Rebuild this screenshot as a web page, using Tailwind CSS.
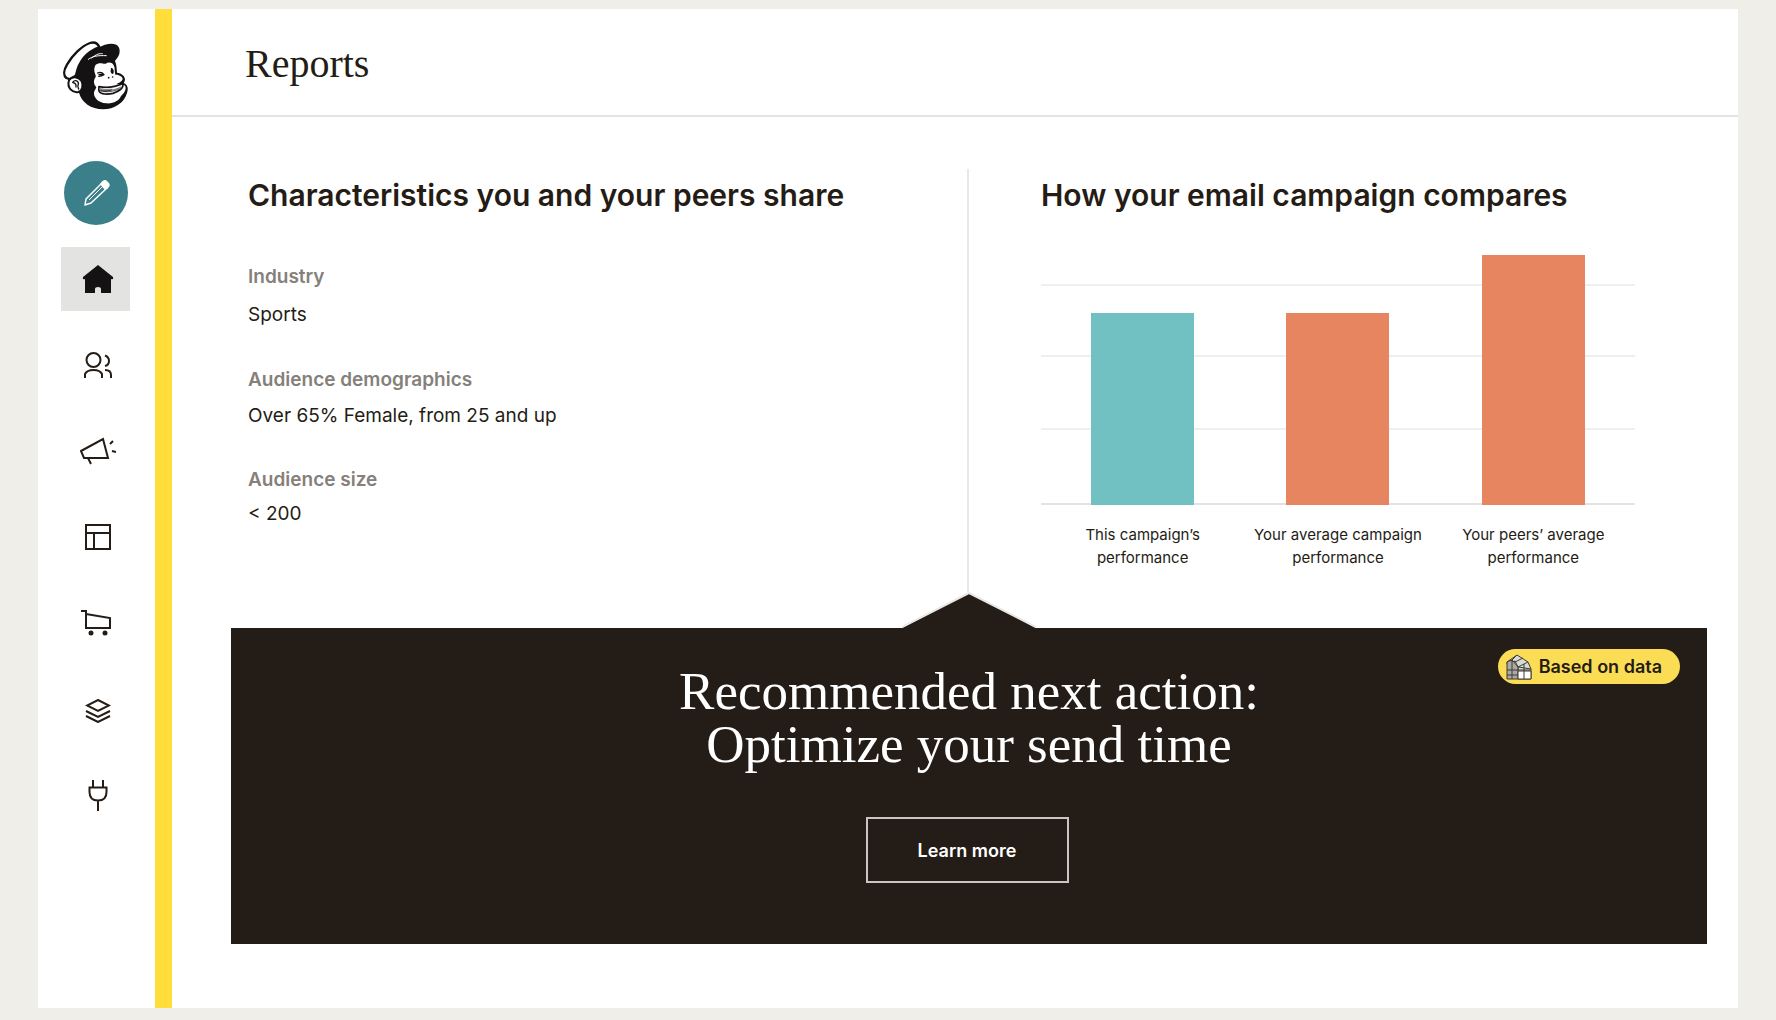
<!DOCTYPE html>
<html lang="en">
  <head>
    <meta charset="utf-8" />
    <meta name="viewport" content="width=device-width, initial-scale=1" />
    <title>Reports</title>
    <script src="https://cdn.jsdelivr.net/npm/@tailwindcss/browser@4"></script>
  </head>
  <body class="flex min-h-screen bg-[#efeee9] px-[38px] pt-[9px] pb-3 font-['Inter','Liberation_Sans',sans-serif] text-[#241c15]">
    <div class="flex flex-1 bg-white">

      <!-- sidebar -->
      <aside class="flex w-[134px] shrink-0 flex-col items-center border-r-[17px] border-[#ffde3b] pt-8 pr-[2px]">
        <a href="#" aria-label="Mailchimp">
          <svg class="h-[70px] w-[66px]" viewBox="38 33 198 210" fill="none" stroke-linecap="round" stroke-linejoin="round">
            <path fill="#141212" d="M86 106C96 82 120 60 147 52C160 44 182 38 198 44C210 50 211 70 202 82C199 88 195 90 194 93C199 104 199 116 200 128C214 130 224 138 224 149C223 155 220 158 221 160C232 164 235 176 230 189C222 218 192 238 158 238C122 237 94 218 86 188L70 186L60 146Z" />
            <path fill="#fff" d="M135 106C146 94 160 103 166 101C175 94 188 98 190 106C195 114 192 124 195 134C207 133 218 141 217 148C214 156 205 159 198 162C209 166 218 162 224 167C230 177 221 190 212 198C207 212 188 222 168 220C143 219 129 202 131 187C133 180 137 177 138 171C129 163 129 150 136 141C139 136 126 124 135 106Z" />
            <path fill="#fff" stroke="#141212" stroke-width="7" d="M48 144C38 136 41 119 50 104C66 76 94 48 119 39C132 35 142 40 147 51C111 65 86 92 78 132C78 141 65 140 60 148Z" />
            <path fill="#fff" stroke="#141212" stroke-width="6" d="M56 151C64 137 84 140 93 152C101 166 95 183 84 186C66 189 49 174 56 151Z" />
            <path stroke="#141212" stroke-width="4" d="M67 157C74 147 86 153 84 163C80 169 84 172 85 177M68 158C74 159 78 164 77 171" />
            <path stroke="#fff" stroke-width="3" d="M114 88C127 78 143 76 168 77M124 84C138 72 148 70 156 71" />
            <path stroke="#141212" stroke-width="4" d="M142 129C150 126 157 129 161 134C155 138 150 139 145 139M146 134L158 134" />
            <path fill="#141212" d="M182 113C188 113 191 120 190 128C187 135 181 131 181 124Z" />
            <circle cx="175" cy="143" r="2.500" fill="#141212" />
            <circle cx="187" cy="141" r="2.500" fill="#141212" />
            <path fill="#fff" stroke="#141212" stroke-width="5" d="M146 170C165 173 192 172 217 161C222 174 204 185 188 190C172 194 151 193 147 185C144 180 145 175 146 170Z" />
            <path fill="#8d8a88" d="M149 174C163 177 176 177 187 176C184 183 172 187 152 186C148 183 148 178 149 174Z" />
            <path stroke="#141212" stroke-width="2" d="M151 182C172 185 199 179 212 171M160 185C177 187 195 183 207 177" />
          </svg>
        </a>

        <nav class="mt-[50px] flex flex-col items-center gap-[22px]">
          <button type="button" aria-label="Create" class="flex size-16 items-center justify-center rounded-full bg-[#3b7f8a] text-white">
            <svg class="size-7" viewBox="0 0 28 28" fill="none" stroke="currentColor" stroke-width="1.500" stroke-linejoin="round">
              <path d="M3 26L4 20L20 4Q22 1 25 4Q28 6 25 9L9 24Z" />
              <path fill="currentColor" d="M19 5Q22 0 25 3Q29 6 25 9L23 10Z" />
              <path d="M7 21L20 8" stroke-width="1" />
            </svg>
          </button>
          <a href="#" aria-label="Home" class="flex h-16 w-[69px] items-center justify-center bg-[#e3e3e1]">
            <svg class="ml-1 h-7 w-8" viewBox="0 0 32 28" fill="#141212">
              <path d="M16 0L31 12Q32 15 29 14V28H19V24Q19 22 16 22T13 24V28H3V14Q0 15 1 12Z" />
            </svg>
          </a>
          <a href="#" aria-label="Audience" class="flex h-16 w-[69px] items-center justify-center">
            <svg class="ml-1 h-[26px] w-7" viewBox="0 0 28 26" fill="none" stroke="#241c15" stroke-width="2">
              <circle cx="9.500" cy="8" r="7" />
              <path d="M1 26V22Q3 18 9.500 18T18 22V26" />
              <path d="M21 3.500Q25 5 25 9T21 14M21 18Q27 18 27 23V26" />
            </svg>
          </a>
          <a href="#" aria-label="Campaigns" class="flex h-16 w-[69px] items-center justify-center">
            <svg class="ml-1 h-7 w-9" viewBox="0 0 36 28" fill="none" stroke="#241c15" stroke-width="2">
              <path d="M1 14L23 2L28 21H4ZM8 21L11 27M30 7L33 4M32 14L36 15" />
            </svg>
          </a>
          <a href="#" aria-label="Templates" class="flex h-16 w-[69px] items-center justify-center">
            <svg class="ml-1 size-[26px]" viewBox="0 0 26 26" fill="none" stroke="#241c15" stroke-width="2">
              <path d="M1 1H25V25H1ZM1 9H25M9 9V25" />
            </svg>
          </a>
          <a href="#" aria-label="Store" class="flex h-16 w-[69px] items-center justify-center">
            <svg class="h-[26px] w-[30px]" viewBox="0 0 30 26" fill="none" stroke="#241c15" stroke-width="2">
              <path d="M0 1H5V18H29V8L5 4" />
              <circle cx="10" cy="23" r="2.500" fill="#241c15" stroke="none" />
              <circle cx="24" cy="23" r="2.500" fill="#241c15" stroke="none" />
            </svg>
          </a>
          <a href="#" aria-label="Content" class="flex h-16 w-[69px] items-center justify-center pt-1">
            <svg class="ml-1 h-6 w-[26px]" viewBox="0 0 26 24" fill="none" stroke="#241c15" stroke-width="2">
              <path d="M13 1L24 6.500L13 12L2 6.500ZM1 12L13 18L25 12M1 17L13 23L25 17" />
            </svg>
          </a>
          <a href="#" aria-label="Integrations" class="flex h-16 w-[69px] items-center justify-center">
            <svg class="ml-1 h-8 w-5" viewBox="0 0 20 32" fill="none" stroke="#241c15" stroke-width="2">
              <path d="M1.500 8.500H18.500V13Q18.500 21.500 10 21.500T1.500 13ZM5 1V8M15 1V8M10 22V32" />
            </svg>
          </a>
        </nav>
      </aside>

      <main class="flex-1">
        <header class="border-b-2 border-[#e3e3e1] px-[73px] pt-[33px] pb-[29px]">
          <h1 class="font-['Liberation_Serif',serif] text-[40px] leading-[44px]">Reports</h1>
        </header>

        <div class="mr-[31px] ml-[59px] pt-[52px]">
          <div class="grid grid-cols-2">
            <section class="border-r-2 border-[#e9e8e4] pl-[17px]">
              <h2 class="pt-[7px] text-[30px] leading-[38px] font-semibold">Characteristics you and your peers share</h2>
              <dl class="mt-[49px] text-[19px] leading-7">
                <dt class="font-semibold text-[#85807a]">Industry</dt>
                <dd class="mt-[10px]">Sports</dd>
                <dt class="mt-[37px] font-semibold text-[#85807a]">Audience demographics</dt>
                <dd class="mt-2">Over 65% Female, from 25 and up</dd>
                <dt class="mt-9 font-semibold text-[#85807a]">Audience size</dt>
                <dd class="mt-[6px]">&lt; 200</dd>
              </dl>
            </section>

            <section class="pr-[72px] pb-[23px] pl-[72px]">
              <h2 class="pt-[7px] text-[30px] leading-[38px] font-semibold">How your email campaign compares</h2>
              <!-- bars and grid lines share one cell -->
              <div class="mt-[41px] grid">
                <div class="col-start-1 row-start-1 flex flex-col pt-[29px]">
                  <div class="h-[71px] border-t-2 border-[#efefec]"></div>
                  <div class="h-[73px] border-t-2 border-[#efefec]"></div>
                  <div class="h-[77px] border-y-2 border-[#efefec] border-b-[#e3e3e1]"></div>
                </div>
                <div class="col-start-1 row-start-1 flex items-end justify-around px-1">
                  <div class="w-[103px] bg-[#72c1c2]" style="height: 192px"></div>
                  <div class="w-[103px] bg-[#e78560]" style="height: 192px"></div>
                  <div class="w-[103px] bg-[#e78560]" style="height: 250px"></div>
                </div>
              </div>
              <div class="mt-[18px] grid grid-cols-3 px-1 text-center text-[15px] leading-[23px]">
                <p>This campaign’s<br />performance</p>
                <p>Your average campaign<br />performance</p>
                <p>Your peers’ average<br />performance</p>
              </div>
            </section>
          </div>

          <svg class="mx-auto block h-9 w-[134px]" viewBox="0 0 134 36">
            <path d="M0 36L67 1L134 36Z" fill="#241c17" />
            <path d="M0 35L67 1L134 35" fill="none" stroke="#e9e8e4" stroke-width="2" />
          </svg>
          <section class="relative bg-[#241c17] pt-[37px] pb-[61px] text-center text-white">
            <span class="absolute top-[21px] right-[27px] flex h-[35px] items-center gap-[7px] rounded-full bg-[#fbdc55] pr-[18px] pl-2 text-[18px] leading-6 font-semibold text-[#241c15]">
              <svg class="size-[26px]" viewBox="0 0 26 26" fill="#d9d9d6" stroke="#3f3b35" stroke-width="1" stroke-linejoin="round">
                <path d="M1 8L11 1L22 8L25 15V25H12V13L9 7L1 10Z" />
                <path fill="#aaa9a5" d="M1 8L6 6L12 13V25H1Z" />
                <path fill="#fff" d="M12 17H25V25H12Z" />
                <path fill="none" d="M1 16H25M6 6V25M6 6L11 1M12 13L22 8M9 8L17 4M18 10V25M4 6L9 8M1 21H12M12 13L25 15" />
              </svg>
              Based on data
            </span>
            <h2 class="font-['Liberation_Serif',serif] text-[53px] leading-[53px]">Recommended next action:<br />Optimize your send time</h2>
            <button type="button" class="mt-[46px] mr-1 h-[66px] w-[203px] border-2 border-[#c9c7c5] text-[18px] font-semibold">Learn more</button>
          </section>
        </div>
      </main>
    </div>
  </body>
</html>
